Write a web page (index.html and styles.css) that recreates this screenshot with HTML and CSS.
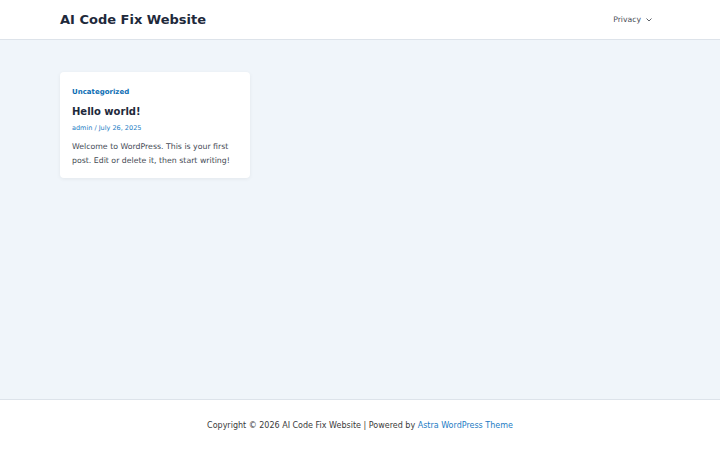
FILE: index.html
```html
<!DOCTYPE html>
<html>
<head>
    <meta charset="utf-8">
    <title>AI Code Fix Website</title>
    <link rel="stylesheet" href="styles.css">
</head>
<body>
    <header class="site-header">
        <div class="container header-inner">
            <a class="site-title" href="#">AI Code Fix Website</a>
            <nav class="main-nav">
                <a class="nav-link" href="#">Privacy
                    <svg class="nav-arrow" width="6" height="4" viewBox="0 0 6 4"><path d="M0.5 0.5 L3 3 L5.5 0.5" fill="none" stroke="#4b4f58" stroke-width="0.9"/></svg>
                </a>
            </nav>
        </div>
    </header>

    <main class="site-content">
        <div class="container">
            <article class="post-card">
                <a class="post-cat" href="#">Uncategorized</a>
                <h2 class="post-title">Hello world!</h2>
                <div class="post-meta"><a href="#">admin</a> / <a href="#">July 26, 2025</a></div>
                <p class="post-excerpt">Welcome to WordPress. This is your first post. Edit or delete it, then start writing!</p>
            </article>
        </div>
    </main>

    <footer class="site-footer">
        <div class="container footer-inner">
            Copyright &copy; 2026 AI Code Fix Website | Powered by <a href="#">Astra WordPress Theme</a>
        </div>
    </footer>
</body>
</html>
```

FILE: styles.css
```css
body {
    margin: 0;
    font-family: "DejaVu Sans", sans-serif;
    color: #3a3a3a;
    background: #f0f5fa;
    display: flex;
    flex-direction: column;
    min-height: 450px;
}

a {
    text-decoration: none;
}

.container {
    width: 600px;
    margin: 0 auto;
}

.site-header {
    background: #fff;
    border-bottom: 1px solid #dde3ea;
    height: 39px;
}
.header-inner {
    display: flex;
    justify-content: space-between;
    align-items: center;
    height: 39px;
}
.site-title {
    color: #1e293b;
    font-size: 13px;
    font-weight: bold;
}
.nav-link {
    color: #4b4f58;
    font-size: 7.7px;
    padding-right: 8px;
    display: flex;
    align-items: center;
    gap: 5px;
}

.site-content {
    flex: 1;
    padding-top: 32px;
}
.post-card {
    background: #fff;
    width: 166px;
    padding: 16px 12px 10px;
    border-radius: 4px;
    box-shadow: 0 1px 4px rgba(0, 0, 0, 0.06);
}
.post-cat {
    display: block;
    color: #0b6db4;
    font-size: 7px;
    font-weight: bold;
}
.post-title {
    margin: 10px 0 7px;
    color: #1e293b;
    font-size: 10px;
    font-weight: bold;
}
.post-meta {
    font-size: 6.5px;
    color: #1c7cc4;
}
.post-meta a {
    color: #1c7cc4;
}
.post-excerpt {
    margin: 8px 0 0;
    font-size: 7.8px;
    line-height: 14px;
    color: #454b55;
}

.site-footer {
    background: #fff;
    border-top: 1px solid #dde3ea;
    height: 50px;
}
.footer-inner {
    text-align: center;
    font-size: 8px;
    line-height: 50px;
    padding-top: 1px;
    color: #3a3a3a;
}
.footer-inner a {
    color: #1c7cc4;
}
```
